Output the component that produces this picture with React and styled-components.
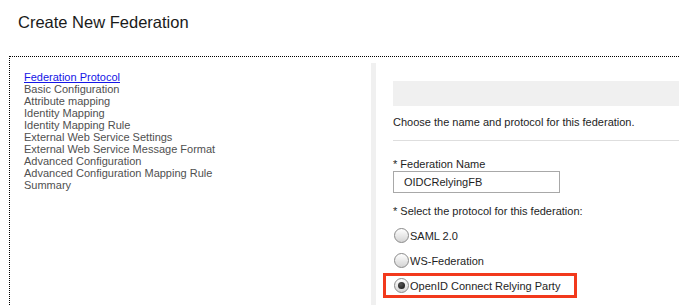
import styled, { createGlobalStyle } from "styled-components";

const Global = createGlobalStyle`
    body {
        margin: 0;
        background: white;
        font-family: "Liberation Sans", Arial, sans-serif;
    }
`;

const steps = [
    "Basic Configuration",
    "Attribute mapping",
    "Identity Mapping",
    "Identity Mapping Rule",
    "External Web Service Settings",
    "External Web Service Message Format",
    "Advanced Configuration",
    "Advanced Configuration Mapping Rule",
    "Summary",
];

function App() {
    return (
        <Page>
            <Global />
            <Title>Create New Federation</Title>
            <Frame>
                <Nav>
                    <NavLink href="#">Federation Protocol</NavLink>
                    {steps.map((s) => (
                        <NavItem key={s}>{s}</NavItem>
                    ))}
                </Nav>
                <Panel>
                    <Banner />
                    <Intro>Choose the name and protocol for this federation.</Intro>
                    <Field>
                        <Label>* Federation Name</Label>
                        <Input defaultValue="OIDCRelyingFB" />
                    </Field>
                    <Label>* Select the protocol for this federation:</Label>
                    <Options>
                        <Option>
                            <Radio type="radio" name="proto" />
                            SAML 2.0
                        </Option>
                        <Option>
                            <Radio type="radio" name="proto" />
                            WS-Federation
                        </Option>
                        <Option $highlight>
                            <Radio type="radio" name="proto" defaultChecked />
                            OpenID Connect Relying Party
                        </Option>
                    </Options>
                </Panel>
            </Frame>
        </Page>
    );
}

export default App;

const Page = styled.div`
    width: 679px;
    height: 305px;
    overflow: hidden;
`;

const Title = styled.h1`
    margin: 0;
    padding: 13px 0 0 18px;
    height: 56px;
    box-sizing: border-box;
    font-size: 16.5px;
    line-height: 19px;
    font-weight: normal;
    color: #1a1a1a;
`;

const Frame = styled.div`
    margin-left: 9px;
    border-top: 1px dotted #000;
    border-left: 1px dotted #000;
    display: grid;
    grid-template-columns: 361px 1fr;
    padding-top: 6px;
    height: 260px;
`;

const Nav = styled.div`
    display: flex;
    flex-direction: column;
    padding: 8px 0 0 14px;
    font-size: 11px;
    line-height: 12px;
`;

const NavLink = styled.a`
    color: #1515e6;
    text-decoration: underline;
    align-self: flex-start;
`;

const NavItem = styled.span`
    color: #505050;
`;

const Panel = styled.div`
    border-left: 5px solid #f0f0f0;
    padding: 18px 0 0 17px;
    font-size: 11px;
    color: #1e1e1e;
`;

const Banner = styled.div`
    height: 25px;
    background: #f0f0f0;
`;

const Intro = styled.p`
    margin: 0;
    padding: 9px 0 11px;
    border-bottom: 1px solid #dedede;
    line-height: 14px;
`;

const Field = styled.div`
    display: flex;
    flex-direction: column;
    padding-top: 16px;
    margin-bottom: 11px;
`;

const Label = styled.div`
    line-height: 14px;
`;

const Input = styled.input`
    width: 167px;
    height: 22px;
    box-sizing: border-box;
    margin-top: 0;
    border: 1px solid #a8a8a8;
    padding: 0 10px;
    font-family: inherit;
    font-size: 11px;
    color: #1e1e1e;
`;

const Options = styled.div`
    display: flex;
    flex-direction: column;
    margin-top: 5px;
    margin-left: -10px;
`;

const Option = styled.label`
    display: flex;
    align-items: center;
    gap: 1px;
    height: 25px;
    width: 194px;
    box-sizing: border-box;
    padding-left: 8px;
    border: 3px solid ${(p) => (p.$highlight ? "#f2391c" : "transparent")};
    font-size: 11px;
    color: #1e1e1e;
`;

const Radio = styled.input`
    appearance: none;
    width: 15px;
    height: 15px;
    margin: 0;
    border-radius: 50%;
    border: 1px solid #8a8a8a;
    background: linear-gradient(#ffffff, #d4d4d4);
    box-sizing: border-box;
    position: relative;

    &:checked::after {
        content: "";
        position: absolute;
        left: 3px;
        top: 3px;
        width: 7px;
        height: 7px;
        border-radius: 50%;
        background: radial-gradient(circle at 40% 35%, #555, #111);
    }
`;
